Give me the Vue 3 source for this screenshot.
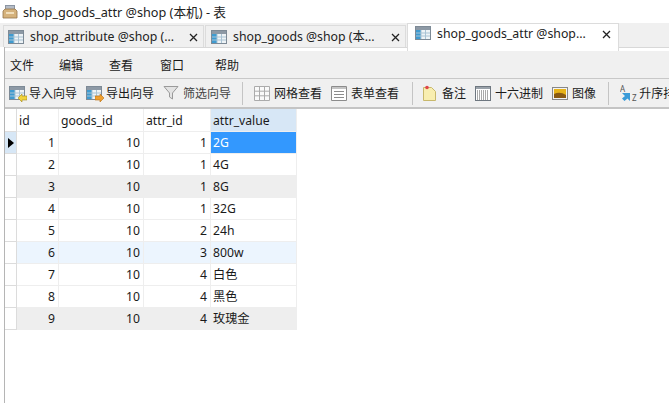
<script setup>
const tabs = [
  { label: 'shop_attribute @shop (...', cls: 'tab t1' },
  { label: 'shop_goods @shop (本...', cls: 'tab t2' },
  { label: 'shop_goods_attr @shop...', cls: 'tab active' }
]
const menus = ['文件', '编辑', '查看', '窗口', '帮助']
const rows = [
  [1, 10, 1, '2G', ''],
  [2, 10, 1, '4G', ''],
  [3, 10, 1, '8G', 'grey'],
  [4, 10, 1, '32G', ''],
  [5, 10, 2, '24h', ''],
  [6, 10, 3, '800w', 'blue'],
  [7, 10, 4, '白色', ''],
  [8, 10, 4, '黑色', ''],
  [9, 10, 4, '玫瑰金', 'grey']
]
</script>

<template>
  <div class="app">
    <svg class="defs" width="0" height="0">
      <symbol id="tbl" viewBox="0 0 16 14">
        <rect x="0.5" y="0.5" width="15" height="13" fill="#f4f8fb" stroke="#7d8a96" />
        <rect x="1" y="1" width="14" height="3" fill="#8d99a5" />
        <rect x="1" y="4" width="5" height="9" fill="#3f9bd0" />
        <rect x="6" y="4" width="9" height="9" fill="#eef3f6" />
        <path d="M1 7h14M1 10h14M6 4v9M10.500 4v9" stroke="#a9c3d4" stroke-width="1" fill="none" />
      </symbol>
    </svg>

    <header class="title">
      <svg class="appicon" width="16" height="16" viewBox="0 0 16 16">
        <path d="M3 1h10v6H3z" fill="#8b95a3" />
        <path d="M4 3h8M4 5h8" stroke="#dfe3e8" />
        <path d="M1 7l2-2h10l2 2v7H1z" fill="#d5b27c" stroke="#94754a" stroke-width="0.800" />
        <path d="M4 8h8v2H4z" fill="#f1dfbd" />
      </svg>
      <span>shop_goods_attr @shop (本机) - 表</span>
    </header>

    <nav class="tabs">
      <div v-for="t in tabs" :key="t.label" :class="t.cls">
        <svg class="ticon" width="16" height="14"><use href="#tbl" /></svg>
        <span class="tlabel">{{ t.label }}</span>
        <svg class="close" width="9" height="9" viewBox="0 0 9 9">
          <path d="M1 1l7 7M8 1l-7 7" stroke="#222" stroke-width="1.300" fill="none" />
        </svg>
      </div>
    </nav>

    <main class="body">
      <div class="menu">
        <span v-for="m in menus" :key="m" class="mi">{{ m }}</span>
      </div>

      <div class="toolbar">
        <div class="btn b1">
          <svg width="16" height="14"><use href="#tbl" /></svg>
          <svg class="arrow" width="9" height="8" viewBox="0 0 9 8"><path d="M0 4l4-4v2h5v4H4v2z" fill="#f1d33c" stroke="#a58a1a" stroke-width="0.600" /></svg>
          <span>导入向导</span>
        </div>
        <div class="btn b2">
          <svg width="16" height="14"><use href="#tbl" /></svg>
          <svg class="arrow" width="9" height="8" viewBox="0 0 9 8"><path d="M9 4L5 0v2H0v4h5v2z" fill="#f0a030" stroke="#b86f10" stroke-width="0.600" /></svg>
          <span>导出向导</span>
        </div>
        <div class="btn b3 dim">
          <svg width="16" height="16" viewBox="0 0 16 16"><path d="M1 1.500h14L9.500 8v6l-3-2V8z" fill="#e3e3e3" stroke="#9a9a9a" /></svg>
          <span>筛选向导</span>
        </div>
        <i class="sep s1"></i>
        <div class="btn b4">
          <svg width="16" height="15" viewBox="0 0 16 15"><path d="M.5.500h15v14H.5zM5.500.500v14M10.500.500v14M.5 5.200h15M.5 9.800h15" fill="#fafafa" stroke="#ababab" /></svg>
          <span>网格查看</span>
        </div>
        <div class="btn b5">
          <svg width="16" height="15" viewBox="0 0 16 15"><path d="M.5.500h15v14H.5z" fill="#fff" stroke="#8c8c8c" /><path d="M1 2h14" stroke="#c4c4c4" stroke-width="2" /><path d="M3 5.500h10M3 8.500h10M3 11.500h10" stroke="#8c8c8c" /></svg>
          <span>表单查看</span>
        </div>
        <i class="sep s2"></i>
        <div class="btn b6">
          <svg width="13" height="16" viewBox="0 0 13 16"><path d="M.5 2.500h8l4 4v9H.5z" fill="#f8eeb0" stroke="#c8b86c" /><circle cx="4" cy="2.500" r="1.800" fill="#e0454a" /></svg>
          <span>备注</span>
        </div>
        <div class="btn b7">
          <svg width="16" height="15" viewBox="0 0 16 15"><rect x=".5" y=".5" width="15" height="14" fill="#fff" stroke="#6e7780" /><path d="M1 2h14" stroke="#9aa2aa" stroke-width="2" /><path d="M2 5h12M2 7h12M2 9h12M2 11h12M2 13h12" stroke="#555" stroke-width="1" stroke-dasharray="1 1" /></svg>
          <span>十六进制</span>
        </div>
        <div class="btn b8">
          <svg width="16" height="13" viewBox="0 0 16 13"><rect x=".5" y=".5" width="15" height="12" fill="#f3f3f3" stroke="#888" /><rect x="2" y="2" width="12" height="9" fill="#e7b318" /><path d="M2 7q6-3 12 1v3H2z" fill="#8a5a12" /></svg>
          <span>图像</span>
        </div>
        <i class="sep s3"></i>
        <div class="btn b9">
          <svg width="18" height="17" viewBox="0 0 18 17">
            <text x="0" y="7" font-size="8" fill="#555" font-family="Noto Sans">A</text>
            <text x="12" y="16" font-size="8" fill="#555" font-family="Noto Sans">Z</text>
            <path d="M2 8h8v8L7.500 13.500 4.500 16 2 13.500 5 11z" fill="#3b9bd8" />
          </svg>
          <span>升序排序</span>
        </div>
      </div>

      <section class="grid">
        <div class="row head">
          <div class="ind"></div>
          <div class="c c1">id</div>
          <div class="c c2">goods_id</div>
          <div class="c c3">attr_id</div>
          <div class="c c4 cur">attr_value</div>
        </div>
        <div v-for="(r, i) in rows" :key="r[0]" :class="['row', r[4]]">
          <div :class="['ind', i === 0 ? 'curind' : '']"><b v-if="i === 0" class="tri"></b></div>
          <div class="c c1 num">{{ r[0] }}</div>
          <div class="c c2 num">{{ r[1] }}</div>
          <div class="c c3 num">{{ r[2] }}</div>
          <div :class="['c', 'c4', i === 0 ? 'sel' : '']">{{ r[3] }}</div>
        </div>
      </section>
    </main>
  </div>
</template>

<style>
html, body { margin: 0; padding: 0; background: #fff; overflow: hidden; }
</style>

<style scoped>
.app {
  width: 669px;
  height: 403px;
  overflow: hidden;
  background: #fff;
  font-family: "Noto Sans", "Noto Sans CJK SC", sans-serif;
  font-size: 12px;
  color: #1a1a1a;
}
.defs { position: absolute; }
.title {
  height: 23px;
  display: flex;
  align-items: center;
  padding-left: 2px;
  gap: 5px;
  font-size: 12.700px;
  color: #222;
}
.tabs {
  height: 24px;
  background: #f0f0f0;
  display: flex;
  padding-left: 3px;
  gap: 1px;
  box-sizing: border-box;
  position: relative;
  z-index: 1;
}
.tab {
  height: 22px;
  width: 201px;
  margin-top: 2px;
  box-sizing: border-box;
  border: 1px solid #dcdcdc;
  border-bottom: 0;
  display: flex;
  align-items: center;
  position: relative;
  flex-shrink: 0;
}
.t1 { padding-left: 4px; }
.t2 { padding-left: 5px; }
.tab.active {
  width: 212px;
  height: 28px;
  margin-top: 0;
  background: #fff;
  border-bottom: 0;
  align-items: flex-start;
  padding: 2px 0 0 7px;
}
.tlabel { margin-left: 6px; white-space: nowrap; font-size: 12.300px; color: #222; line-height: 16px; }
.close { position: absolute; right: 5px; top: 7px; }
.active .close { top: 6px; right: 7px; }
.body {
  margin-left: 4px;
  border-left: 1px solid #b5b5b5;
  height: 356px;
  box-sizing: border-box;
}
.menu {
  height: 32px;
  background: #f0f0f0;
  display: flex;
  align-items: center;
  padding: 4px 0 0 5px;
  box-sizing: border-box;
  border-top: 1px solid #d8d8d8;
  border-bottom: 1px solid #c8c8c8;
  font-size: 12px;
  background-image: linear-gradient(#fff, #fff);
  background-repeat: no-repeat;
  background-size: 100% 3px;
}
.mi { flex-shrink: 0; }
.mi:nth-child(1) { width: 49px; }
.mi:nth-child(2) { width: 50px; }
.mi:nth-child(3) { width: 51px; }
.mi:nth-child(4) { width: 55px; }
.toolbar {
  height: 30px;
  box-sizing: border-box;
  background: #f0f0f0;
  border-bottom: 2px solid #c4c4c4;
  display: flex;
  align-items: center;
  position: relative;
  overflow: hidden;
}
.btn {
  display: flex;
  align-items: center;
  gap: 4px;
  white-space: nowrap;
  position: relative;
  font-size: 12px;
  flex-shrink: 0;
}
.btn svg { flex-shrink: 0; }
.arrow { position: absolute; left: 9px; bottom: 0; }
.dim { color: #444; }
.b1 { margin-left: 4px; }
.b2 { margin-left: 9px; }
.b3 { margin-left: 9px; }
.sep { width: 1px; height: 23px; background: #c4c4c4; flex-shrink: 0; }
.s1 { margin-left: 11px; }
.b4 { margin-left: 11px; }
.b5 { margin-left: 9px; }
.s2 { margin-left: 13px; }
.b6 { margin-left: 10px; gap: 6px; }
.b7 { margin-left: 9px; }
.b8 { margin-left: 9px; }
.s3 { margin-left: 12px; }
.b9 { margin-left: 11px; gap: 1px; }
.row { display: flex; height: 22px; }
.head { height: 23px; }
.head .c { line-height: 23px; }
.ind {
  width: 12px;
  box-sizing: border-box;
  background: #fff;
  border-right: 1px solid #dcdcdc;
  border-bottom: 1px solid #dcdcdc;
  display: flex;
  align-items: center;
  padding-left: 3px;
}
.curind { background: #d7e7f6; }
.tri {
  width: 0;
  height: 0;
  border-left: 6px solid #000;
  border-top: 5px solid transparent;
  border-bottom: 5px solid transparent;
}
.c {
  box-sizing: border-box;
  border-right: 1px solid #eee;
  border-bottom: 1px solid #eee;
  line-height: 21px;
  padding: 0 2px;
  white-space: nowrap;
  font-size: 12.200px;
}
.c1 { width: 42px; }
.c2 { width: 85px; }
.c3 { width: 67px; }
.c4 { width: 86px; }
.num { text-align: right; padding-right: 3px; }
.head .cur { background: #d7e7f6; }
.grey .c { background: #eee; }
.blue .c { background: #ecf5fe; }
.sel { background: #3398fe; color: #fff; }
</style>
